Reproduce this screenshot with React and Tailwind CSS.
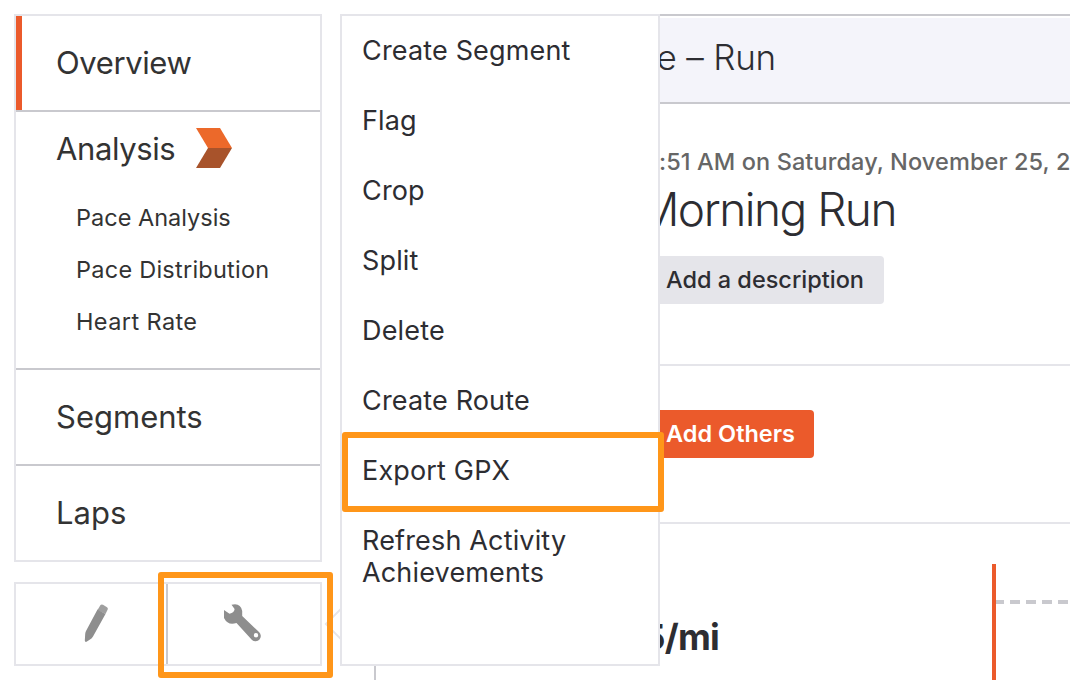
const subItems = [
  { label: 'Pace Analysis', spacing: 'tracking-[0px]' },
  { label: 'Pace Distribution', spacing: 'tracking-[0.250px]' },
  { label: 'Heart Rate', spacing: 'tracking-[0.4px]' },
];
const menuItems = ['Create Segment', 'Flag', 'Crop', 'Split', 'Delete', 'Create Route', 'Export GPX', 'Refresh Activity Achievements'];

function Chevron() {
  return (
    <svg width="36" height="40" viewBox="0 0 36 40" className="mb-0.5 shrink-0">
      <path d="M0 0H24L36 20H12Z" fill="#ec692a" />
      <path d="M12 20H36L24 40H0Z" fill="#a8532b" />
    </svg>
  );
}

function Pencil() {
  return (
    <svg width="40" height="50" viewBox="0 0 40 50" fill="#8e8e8e">
      <path d="M24.500 7Q25.500 6 27 6.800L31 9.300Q32.300 10.300 31.700 11.500L29.500 16L21.500 12Z" opacity=".85" />
      <path d="M21.500 11.500L29.500 16L17 38.500Q16 40.500 14 41.500L10.500 43.800Q9 44.300 8.800 42.500L9.200 36Q9.300 34.500 10 33Z" />
    </svg>
  );
}

function Wrench() {
  return (
    <svg width="52" height="50" viewBox="0 0 52 50">
      <path fill="#8e8e8e" fillRule="evenodd" d="M8 12L13.500 15.800Q18.500 14.500 18.600 11L15.500 6.800Q24.500 4.500 26.200 13V18L43 34A4.900 4.900 0 0 1 36 42L20.500 25Q12 28 8 20ZM40 35A2.200 2.200 0 1 0 40 39.400A2.200 2.200 0 1 0 40 35Z" />
    </svg>
  );
}

function Sidebar() {
  return (
    <aside className="w-[308px] shrink-0 text-[31px] text-[#333]">
      <nav className="border-2 border-[#e5e5ea]">
        <div className="flex h-24 items-center border-b-2 border-[#c9c9ce]">
          <span className="h-full w-1.5 bg-[#eb5a2b]" />
          <span className="pl-[34px] tracking-[-0.4px]">Overview</span>
        </div>
        <div className="h-[258px] border-b-2 border-[#c9c9ce]">
          <div className="flex h-[74px] items-center gap-[21px] pl-10">
            <span className="tracking-[-0.4px]">Analysis</span>
            <Chevron />
          </div>
          <ul className="mt-1.5 pl-[60px] text-[23.500px] leading-[52px]">
            {subItems.map((t) => <li key={t.label} className={t.spacing}>{t.label}</li>)}
          </ul>
        </div>
        <div className="flex h-24 items-center border-b-2 border-[#c9c9ce] pl-10">Segments</div>
        <div className="flex h-[94px] items-center pl-10">Laps</div>
      </nav>
      <div className="mt-5 flex h-[84px] border-2 border-[#e5e5ea]">
        <div className="flex w-[152px] border-r-2 border-[#c9c9ce] pl-[60px] pt-3.5"><Pencil /></div>
        <div className="pl-12 pt-3.5"><Wrench /></div>
      </div>
    </aside>
  );
}

function Main() {
  return (
    <main className="ml-[52px] h-[666px] flex-1 overflow-hidden whitespace-nowrap border-l-2 border-t-2 border-[#c9c9ce] text-[#2d2d32]">
      <header className="mt-0.5 flex h-[86px] items-center border-b-2 border-[#c9c9ce] bg-[#f4f4fa] pb-1.5">
        <h2 className="w-[400px] text-right text-[35px] font-light leading-none tracking-[-0.2px]">e – Run</h2>
      </header>
      <section className="h-[262px] border-b-2 border-[#e5e5ea] pt-[42px]">
        <p className="pl-[283px] text-[23.500px] font-medium leading-8 tracking-[0.1px] text-[#666]">:51 AM on Saturday, November 25, 2</p>
        <h1 className="-mt-px w-[520px] text-right text-[46px] font-light leading-[64px] tracking-[-1.5px]">Morning Run</h1>
        <button className="mt-[15px] block h-12 w-[508px] rounded bg-[#e5e5ea] pr-5 text-right text-[23.500px] font-medium">Add a description</button>
      </section>
      <section className="h-[158px] border-b-2 border-[#e5e5ea] pt-11">
        <button className="block h-12 w-[438px] rounded bg-[#eb5a2b] pr-[19px] text-right text-[23.500px] font-semibold text-white">Add Others</button>
      </section>
      <section className="flex pt-10">
        <div className="w-[343px] pt-[49px] text-right text-[36px] font-bold leading-[48px] tracking-[-0.8px]">5/mi</div>
        <div className="ml-[273px] h-[120px] w-1 bg-[#eb5a2b]" />
        <svg width="74" height="120" className="shrink-0">
          <path d="M-2 38H74" stroke="#c9c9ce" strokeWidth="4" strokeDasharray="10 6" />
        </svg>
      </section>
    </main>
  );
}

function ToolsMenu() {
  return (
    <ul className="absolute left-[340px] top-3.5 flex h-[652px] w-80 flex-col gap-[38px] border-2 border-[#e5e5ea] bg-white pl-5 pr-16 pt-[19px] text-[27px] leading-8 tracking-[0.160px] text-[#2d2d32]">
      {menuItems.map((t) => <li key={t}>{t}</li>)}
    </ul>
  );
}

export default function App() {
  return (
    <div className="relative flex h-[680px] w-[1070px] overflow-hidden bg-white pl-3.5 pt-3.5 font-['Inter',sans-serif]">
      <Sidebar />
      <Main />
      <div className="absolute left-[329px] top-[613px] size-[22px] rotate-45 border-2 border-[#e5e5ea]" />
      <ToolsMenu />
      <div className="absolute left-[342px] top-[432px] h-20 w-[322px] rounded-[3px] border-6 border-[#ff9619]" />
      <div className="absolute left-[158px] top-[572px] h-[106px] w-[175px] rounded-[3px] border-6 border-[#ff9619]" />
    </div>
  );
}
